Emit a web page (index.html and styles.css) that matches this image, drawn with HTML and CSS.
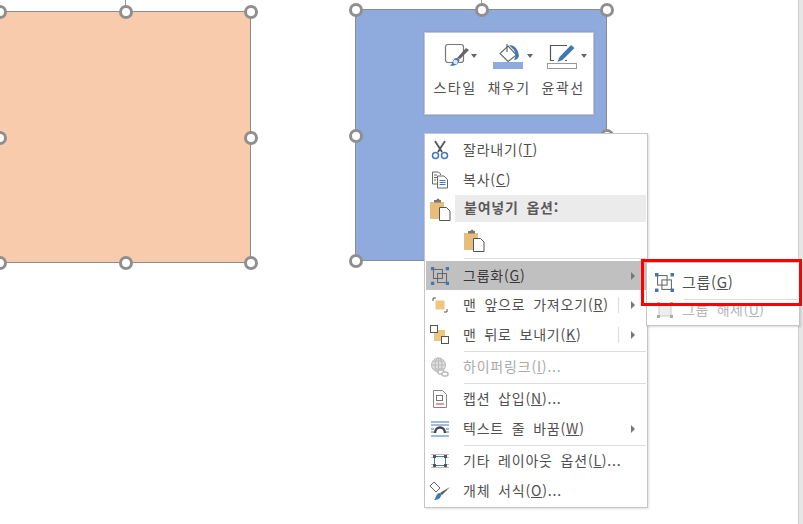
FILE: index.html
```html
<!DOCTYPE html>
<html lang="ko">
  <head>
    <meta charset="UTF-8" />
    <title>그룹화</title>
    <link rel="stylesheet" href="styles.css">
  </head>
  <body>
    <svg class="defs" width="0" height="0">
      <symbol id="clip" viewBox="0 0 22 24">
        <path d="M1 5h14v17H2a1 1 0 0 1-1-1z" fill="#e8bd7c"/>
        <path d="M5 5V3h2.500a1.500 1.500 0 0 1 3 0H12v2.500H5z" fill="#777"/>
        <path d="M10.500 10.500h7l3.500 3.500v9.500H10.500z" fill="#fff" stroke="#555"/>
      </symbol>
      <symbol id="grp" viewBox="0 0 22 22">
        <rect x="3" y="3" width="11" height="11" fill="none" stroke="#666" stroke-width="1.200"/>
        <rect x="8" y="8" width="11" height="11" fill="none" stroke="#666" stroke-width="1.200"/>
        <g fill="#3f78b5">
          <rect x="0" y="0" width="4" height="4"/><rect x="18" y="0" width="4" height="4"/>
          <rect x="0" y="18" width="4" height="4"/><rect x="18" y="18" width="4" height="4"/>
        </g>
      </symbol>
    </svg>

    <div class="scrollbar"></div>

    <!-- orange shape -->
    <div class="shape shape--orange">
      <i class="stem"></i>
      <i class="handle h-tl"></i><i class="handle h-tc"></i><i class="handle h-tr"></i>
      <i class="handle h-ml"></i><i class="handle h-mr"></i>
      <i class="handle h-bl"></i><i class="handle h-bc"></i><i class="handle h-br"></i>
    </div>

    <!-- blue shape -->
    <div class="shape shape--blue">
      <i class="stem"></i>
      <i class="handle h-tl"></i><i class="handle h-tc"></i><i class="handle h-tr"></i>
      <i class="handle h-ml"></i><i class="handle h-mr"></i>
      <i class="handle h-bl"></i><i class="handle h-bc"></i><i class="handle h-br"></i>
    </div>

    <!-- mini toolbar -->
    <div class="mini">
      <div class="mini__item">
        <div class="mini__icon">
          <svg width="36" height="26" viewBox="0 0 36 26">
            <g transform="translate(7 0)">
              <rect x="2.500" y="1.500" width="18" height="18" rx="2.500" fill="#fff" stroke="#777" stroke-width="1.200"/>
              <path d="M25 7l-9 9-3-1 9-10z" fill="#666" transform="translate(1 0)"/>
              <path d="M13 15c3 0 4 2 3 4-2 3-5 4-9 4 3-2 2-7 6-8z" fill="#3f78b5"/>
              <circle cx="12.500" cy="19" r="2.300" fill="#dfe8f3"/>
            </g>
          </svg>
          <i class="caret caret--near"></i>
        </div>
        <span>스타일</span>
      </div>
      <div class="mini__item">
        <div class="mini__icon">
          <svg width="36" height="26" viewBox="0 0 36 26">
            <rect x="3" y="19" width="30" height="7" fill="#8faadc"/>
            <path d="M18 3l8.500 9-8.500 6.500-8-8z" fill="#fff" stroke="#666" stroke-width="1.100"/>
            <path d="M17 1v8" stroke="#666" stroke-width="1.200"/>
            <path d="M19 2c6 0 9 4 10 11-1 3-3 4-5 4 2-3 2-7 0-10z" fill="#3f78b5"/>
          </svg>
          <i class="caret"></i>
        </div>
        <span>채우기</span>
      </div>
      <div class="mini__item">
        <div class="mini__icon">
          <svg width="36" height="26" viewBox="0 0 36 26">
            <g transform="translate(1 0)">
              <path d="M22 2.500H5.500v15H9M22 17.500h-2" fill="none" stroke="#555" stroke-width="1.200"/>
              <path d="M26 2l3.500 3-12 12-5 2 2-5z" fill="#3f78b5"/>
              <rect x="2.500" y="20.500" width="29" height="5" fill="#fff" stroke="#999"/>
            </g>
          </svg>
          <i class="caret"></i>
        </div>
        <span>윤곽선</span>
      </div>
    </div>

    <!-- context menu -->
    <div class="menu">
      <div class="row">
        <span class="row__icon">
          <svg width="18" height="20" viewBox="0 0 18 20">
            <path d="M4 1l7 11M14 1L7 12" stroke="#555" stroke-width="1.800" fill="none"/>
            <circle cx="4.500" cy="15.500" r="3" fill="none" stroke="#3f78b5" stroke-width="1.500"/>
            <circle cx="13.500" cy="15.500" r="3" fill="none" stroke="#3f78b5" stroke-width="1.500"/>
          </svg>
        </span>
        <span class="row__text">잘라내기(<u>T</u>)</span>
      </div>
      <div class="row">
        <span class="row__icon">
          <svg width="18" height="18" viewBox="0 0 18 18">
            <path d="M1.500 1h6l2 2v1M6 13H1.500V1" fill="none" stroke="#666"/>
            <path d="M3 4h3M3 6.500h3M3 9h2" stroke="#666"/>
            <path d="M6.500 5h6.500l3.500 3.500V17h-10z" fill="#fff" stroke="#666"/>
            <path d="M8.500 9.500h6M8.500 11.500h6M8.500 13.500h6" stroke="#3f78b5"/>
          </svg>
        </span>
        <span class="row__text">복사(<u>C</u>)</span>
      </div>
      <div class="row row--head">
        <span class="row__icon"><svg width="22" height="24"><use href="#clip"/></svg></span>
        <span class="row__title">붙여넣기 옵션:</span>
      </div>
      <div class="row row--paste">
        <svg class="paste-btn" width="22" height="24"><use href="#clip"/></svg>
      </div>
      <hr class="sep sep--gap">

      <div class="row row--active">
        <span class="row__icon"><svg width="18" height="18"><use href="#grp"/></svg></span>
        <span class="row__text">그룹화(<u>G</u>)</span>
        <i class="arrow"></i>
      </div>
      <div class="row">
        <span class="row__icon">
          <svg width="16" height="16" viewBox="0 0 16 16">
            <path d="M1 4V1h3M15 12v3h-3" fill="none" stroke="#555"/>
            <rect x="3.500" y="3.500" width="9" height="9" fill="#eec77e"/>
          </svg>
        </span>
        <span class="row__text">맨 앞으로 가져오기(<u>R</u>)</span>
        <i class="split"></i>
        <i class="arrow"></i>
      </div>
      <div class="row">
        <span class="row__icon">
          <svg width="20" height="20" viewBox="0 0 20 20">
            <rect x="4" y="5" width="11" height="11" fill="#eec77e"/>
            <rect x="0.500" y="0.500" width="7" height="7" fill="#fff" stroke="#555"/>
            <rect x="11.500" y="11.500" width="7" height="7" fill="#fff" stroke="#555"/>
          </svg>
        </span>
        <span class="row__text">맨 뒤로 보내기(<u>K</u>)</span>
        <i class="split"></i>
        <i class="arrow"></i>
      </div>
      <hr class="sep">
      <div class="row row--off">
        <span class="row__icon">
          <svg width="20" height="20" viewBox="0 0 20 20" fill="none" stroke="#bbb">
            <circle cx="8.500" cy="8" r="7" fill="#ddd"/>
            <path d="M1.500 8h14M8.500 1v14M3 4h11M3 12h11"/>
            <ellipse cx="8.500" cy="8" rx="3.500" ry="7"/>
            <rect x="8" y="13" width="6" height="4" rx="2" fill="#fff" stroke-width="1.500"/>
            <rect x="12" y="15" width="6" height="4" rx="2" fill="#fff" stroke-width="1.500"/>
          </svg>
        </span>
        <span class="row__text">하이퍼링크(<u>I</u>)...</span>
      </div>
      <hr class="sep">
      <div class="row">
        <span class="row__icon">
          <svg width="14" height="18" viewBox="0 0 14 18">
            <path d="M.5.500h9l4 4v13H.500z" fill="#fff" stroke="#888"/>
            <rect x="3.500" y="5.500" width="6" height="5" fill="none" stroke="#777"/>
            <path d="M3 14h8" stroke="#c0392b"/>
          </svg>
        </span>
        <span class="row__text">캡션 삽입(<u>N</u>)...</span>
      </div>
      <div class="row">
        <span class="row__icon">
          <svg width="20" height="16" viewBox="0 0 20 16">
            <path d="M1 1h18M1 4h18M1 15h18" stroke="#3f78b5"/>
            <path d="M1 8h3M1 11h3M16 8h3M16 11h3" stroke="#3f78b5"/>
            <path d="M5 12a5 5.500 0 0 1 10 0" fill="none" stroke="#444" stroke-width="2.400"/>
          </svg>
        </span>
        <span class="row__text">텍스트 줄 바꿈(<u>W</u>)</span>
        <i class="arrow"></i>
      </div>
      <hr class="sep">
      <div class="row">
        <span class="row__icon">
          <svg width="20" height="16" viewBox="0 0 20 16">
            <path d="M1 1.500h18M1 4.500h18M1 11.500h18M1 14.500h18" stroke="#bbb"/>
            <rect x="4.500" y="3.500" width="11" height="9" fill="#fff" stroke="#3f78b5"/>
            <g fill="#555"><rect x="3" y="2" width="3" height="3"/><rect x="14" y="2" width="3" height="3"/><rect x="3" y="11" width="3" height="3"/><rect x="14" y="11" width="3" height="3"/></g>
          </svg>
        </span>
        <span class="row__text">기타 레이아웃 옵션(<u>L</u>)...</span>
      </div>
      <div class="row">
        <span class="row__icon">
          <svg width="22" height="20" viewBox="0 0 22 20">
            <path d="M5 1l6 6-4 4-6-6z" fill="#fff" stroke="#666"/>
            <path d="M21 6l-8 8-2-2z" fill="#555"/>
            <path d="M10 12c2 0 3 2 2 3-1 3-4 4-7 4 2-2 2-6 5-7z" fill="#3f78b5"/>
          </svg>
        </span>
        <span class="row__text">개체 서식(<u>O</u>)...</span>
      </div>
    </div>

    <!-- submenu -->
    <div class="submenu">
      <div class="sub-row">
        <span class="sub-row__icon"><svg width="19" height="19"><use href="#grp"/></svg></span>
        <span class="sub-row__text sub-row__text--big">그룹(<u>G</u>)</span>
      </div>
      <hr class="sep sep--sub">
      <div class="sub-row sub-row--off">
        <span class="sub-row__icon">
          <svg width="18" height="16" viewBox="0 0 18 16">
            <rect x="3" y="2" width="12" height="12" fill="#eee" stroke="#ccc"/>
            <g fill="#aaa"><rect x="1" y="0" width="3" height="3"/><rect x="14" y="0" width="3" height="3"/><rect x="1" y="13" width="3" height="3"/><rect x="14" y="13" width="3" height="3"/></g>
          </svg>
        </span>
        <span class="sub-row__text">그룹 해제(<u>U</u>)</span>
      </div>
    </div>
    <div class="redbox"></div>
  </body>
</html>
```

FILE: styles.css
```css
* {
  box-sizing: border-box;
}

html,
body {
  margin: 0;
  height: 100%;
}

body {
  position: relative;
  width: 803px;
  height: 524px;
  overflow: hidden;
  background: #fff;
  font-family: "Noto Sans CJK KR", "Noto Sans", sans-serif;
  font-size: 14px;
  color: #505050;
}

.defs {
  position: absolute;
}

/* shapes on the canvas */
.shape {
  position: absolute;
  width: 252px;
  height: 252px;
  border: 1px solid #8c8c8c;
}

.shape--orange {
  left: -1px;
  top: 11px;
  background: #f8cbad;
}

.shape--blue {
  left: 355px;
  top: 9px;
  background: #8faadc;
  border-radius: 2px;
}

.stem {
  position: absolute;
  left: 125px;
  top: -12px;
  width: 1px;
  height: 12px;
  background: #999;
}

.handle {
  position: absolute;
  width: 14px;
  height: 14px;
  margin: -7px 0 0 -7px;
  border: 3px solid #8f8f8f;
  border-radius: 50%;
  background: #fff;
}

.h-tl { left: 0; top: 0; }
.h-tc { left: 126px; top: 0; }
.h-tr { left: 251px; top: 0; }
.h-ml { left: 0; top: 126px; }
.h-mr { left: 251px; top: 126px; }
.h-bl { left: 0; top: 251px; }
.h-bc { left: 126px; top: 251px; }
.h-br { left: 251px; top: 251px; }

/* mini toolbar */
.mini {
  position: absolute;
  left: 424px;
  top: 32px;
  width: 170px;
  height: 83px;
  display: flex;
  justify-content: center;
  gap: 10px;
  padding-top: 10px;
  background: #fff;
  border: 1px solid #c6c6c6;
  box-shadow: 0 0 2px rgba(0, 0, 0, 0.15);
}

.mini__item {
  width: 44px;
  display: flex;
  flex-direction: column;
  align-items: center;
  gap: 8px;
  white-space: nowrap;
  line-height: 20px;
}

.mini__item span {
  letter-spacing: 1.5px;
}

.mini__icon {
  display: flex;
  align-items: center;
  margin-left: 6px;
  width: 44px;
  height: 26px;
}

.caret {
  width: 0;
  height: 0;
  margin-left: 1px;
  border: 3.5px solid transparent;
  border-top: 4px solid #666;
  border-bottom: 0;
}

.caret--near {
  margin-left: -1px;
}

/* context menu */
.menu {
  position: absolute;
  left: 424px;
  top: 133px;
  width: 224px;
  height: 375px;
  padding: 1px;
  background: #fff;
  border: 1px solid #c6c6c6;
  box-shadow: 1px 1px 2px rgba(0, 0, 0, 0.12);
}

.row {
  position: relative;
  display: flex;
  align-items: center;
  height: 30px;
  white-space: nowrap;
}

.row__icon {
  flex: none;
  width: 28px;
  display: flex;
  justify-content: center;
}

.row__text {
  margin-left: 9px;
  padding-bottom: 2px;
  line-height: 20px;
  letter-spacing: 0.8px;
  word-spacing: 3px;
}

.row--head {
  height: 27px;
}

.row__title {
  display: block;
  flex: 1;
  height: 27px;
  margin-left: 1px;
  padding-left: 9px;
  line-height: 25px;
  font-size: 14px;
  font-weight: 700;
  letter-spacing: 0.8px;
  word-spacing: 3px;
  color: #5a5a5a;
  background: #ebebeb;
}

.row--paste {
  height: 35px;
  padding-left: 37px;
}

.row--active {
  height: 29px;
  background: #c0c0c0;
  color: #383838;
}

.row--off {
  color: #aaa;
}

.arrow {
  position: absolute;
  left: 205px;
  top: 50%;
  width: 0;
  height: 0;
  margin-top: -4px;
  border: 4px solid transparent;
  border-left: 4px solid #777;
  border-right: 0;
}

.split {
  position: absolute;
  left: 192px;
  top: 7px;
  width: 1px;
  height: 16px;
  background: #ddd;
}

.sep {
  height: 1px;
  margin: 1px 0 0 38px;
  border: 0;
  background: #dcdcdc;
}

.sep--gap {
  margin-bottom: 2px;
}

/* submenu */
.submenu {
  position: absolute;
  left: 646px;
  top: 262px;
  width: 154px;
  height: 64px;
  padding-top: 4px;
  background: #fff;
  border: 1px solid #c6c6c6;
  box-shadow: 1px 1px 2px rgba(0, 0, 0, 0.15);
}

.sub-row {
  display: flex;
  align-items: center;
  height: 31px;
  white-space: nowrap;
}

.sub-row__icon {
  flex: none;
  width: 34px;
  display: flex;
  justify-content: center;
  padding-left: 1px;
}

.sub-row__text {
  margin-left: 1px;
  padding-bottom: 2px;
  line-height: 20px;
  letter-spacing: 0.5px;
  word-spacing: 3.5px;
}

.sub-row__text--big {
  font-size: 15px;
  letter-spacing: 0.7px;
}

.sub-row--off {
  height: 20px;
  color: #b5b5b5;
}

.sep--sub {
  margin: 1px 1px 0 37px;
}

.redbox {
  position: absolute;
  left: 641px;
  top: 259px;
  width: 161px;
  height: 47px;
  border: 3px solid #f00;
}

.scrollbar {
  position: absolute;
  right: 0;
  top: 0;
  width: 5px;
  height: 100%;
  background: #e6e6e6;
  border-left: 1px solid #cfcfcf;
}
```
